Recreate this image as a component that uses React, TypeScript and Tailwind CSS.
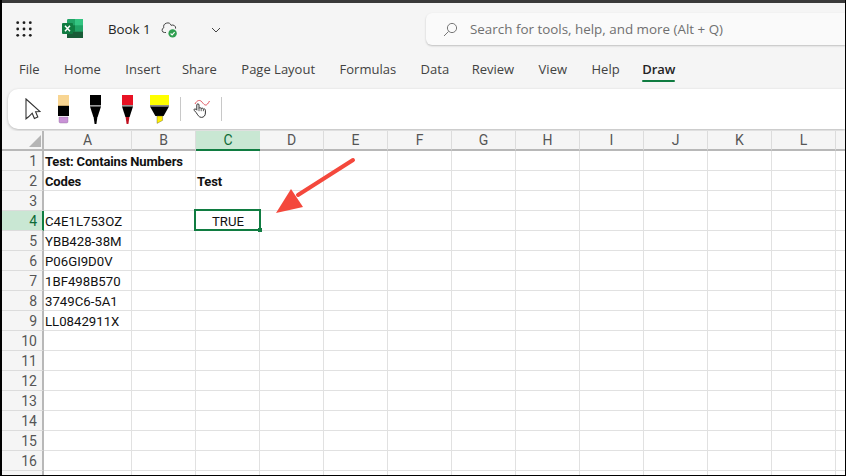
const cols = ["A", "B", "C", "D", "E", "F", "G", "H", "I", "J", "K", "L"];
const rows = Array.from({ length: 17 }, (_, i) => i + 1);
const tabs = [
	{ name: "File", cls: "" },
	{ name: "Home", cls: "" },
	{ name: "Insert", cls: "mr-[-3px]" },
	{ name: "Share", cls: "" },
	{ name: "Page Layout", cls: "" },
	{ name: "Formulas", cls: "" },
	{ name: "Data", cls: "mr-[-2px]" },
	{ name: "Review", cls: "" },
	{ name: "View", cls: "" },
	{ name: "Help", cls: "mr-[-2px]" },
];

const cells: Record<string, { text: string; bold?: boolean; center?: boolean }> = {
	"1A": { text: "Test: Contains Numbers", bold: true },
	"2A": { text: "Codes", bold: true },
	"2C": { text: "Test", bold: true },
	"4A": { text: "C4E1L753OZ" },
	"4C": { text: "TRUE", center: true },
	"5A": { text: "YBB428-38M" },
	"6A": { text: "P06GI9D0V" },
	"7A": { text: "1BF498B570" },
	"8A": { text: "3749C6-5A1" },
	"9A": { text: "LL0842911X" },
};

function Waffle() {
	const dots = [0, 1, 2];
	return (
		<svg width="16" height="16" viewBox="0 0 16 16" className="shrink-0">
			{dots.map((y) =>
				dots.map((x) => <circle key={`${x}-${y}`} cx={1.7 + x * 6.3} cy={1.7 + y * 6.3} r="1.4" fill="#1f1f1f" />),
			)}
		</svg>
	);
}

function ExcelLogo() {
	return (
		<svg width="21" height="19" viewBox="0 0 21 19" className="shrink-0">
			<rect x="5" y="0" width="16" height="19" rx="1.2" fill="#21a366" />
			<rect x="13" y="0" width="8" height="6.3" fill="#33c481" />
			<rect x="5" y="6.3" width="8" height="6.4" fill="#107c41" />
			<rect x="13" y="12.7" width="8" height="6.3" fill="#185c37" />
			<rect x="5" y="12.7" width="8" height="6.3" fill="#185c37" />
			<rect x="0" y="4" width="11" height="11" rx="1" fill="#107c41" />
			<path d="M3 6.8 L8 12.2 M8 6.8 L3 12.2" stroke="#fff" strokeWidth="1.5" />
		</svg>
	);
}

function CloudCheck() {
	return (
		<svg width="17" height="17" viewBox="0 0 17 17" className="shrink-0">
			<path
				d="M5 11.5 H3.4 A2.4 2.4 0 0 1 2.8 6.8 A3.9 3.9 0 0 1 10.2 4.4 A3 3 0 0 1 14.6 7.6"
				fill="none"
				stroke="#444"
				strokeWidth="1"
			/>
			<circle cx="11.6" cy="12.4" r="4.2" fill="#2e9e4f" />
			<path d="M9.6 12.5 L11.1 13.9 L13.6 11.1" fill="none" stroke="#fff" strokeWidth="1.1" />
		</svg>
	);
}

function Cursor() {
	return (
		<svg width="16" height="22" viewBox="0 0 16 22" className="shrink-0">
			<path d="M1 1 L15 13.5 L10.6 13.8 L12.8 19 L9.4 20.5 L7.2 15.2 L3.6 18.8 L1 20.8 Z" fill="#fff" stroke="#333" strokeWidth="1.1" />
		</svg>
	);
}

function Pencil() {
	return (
		<svg width="13" height="29" viewBox="0 0 13 29" className="shrink-0">
			<rect x="1" y="0" width="11" height="10" fill="#f8d592" />
			<rect x="1" y="10" width="11" height="1" fill="#c9a76a" />
			<rect x="1" y="11" width="11" height="10" fill="#000" />
			<path d="M2 22 H11 V26.5 Q11 28 9.5 28 H3.5 Q2 28 2 26.5 Z" fill="#c992d6" stroke="#8e6a98" strokeWidth="0.4" />
		</svg>
	);
}

function Pen({ color }: { color: string }) {
	return (
		<svg width="13" height="29" viewBox="0 0 13 29" className="shrink-0">
			<rect x="1" y="0" width="11" height="10" fill={color} />
			<rect x="1" y="10" width="11" height="1.6" fill="#9a9a9a" />
			<path d="M1 11.6 H12 L8.6 22 H4.4 Z" fill="#000" />
			<path d="M4.6 22 H8.4 L7.4 29 H5.6 Z" fill={color === "#e81224" ? "#c00f1e" : "#000"} />
		</svg>
	);
}

function Highlighter() {
	return (
		<svg width="21" height="29" viewBox="0 0 21 29" className="shrink-0">
			<rect x="1" y="0" width="19" height="10" fill="#ffff00" />
			<rect x="1" y="10" width="19" height="1.4" fill="#8a8a8a" />
			<path d="M1 11.4 H20 L14.6 21 H6.4 Z" fill="#000" />
			<path d="M8 21 H13.6 V25.4 L8 28.4 Z" fill="#ffef00" stroke="#555" strokeWidth="0.4" />
		</svg>
	);
}

function TouchDraw() {
	return (
		<svg width="18" height="20" viewBox="0 0 18 20" className="shrink-0">
			<path d="M3 5 C5 1 8 0.5 10 3 C11.5 5 13.5 7.5 15.5 5 C16.5 3.8 17 3 17.5 2" fill="none" stroke="#e0525c" strokeWidth="1" />
			<path
				d="M4.2 13.6 L2.4 11.6 C1.4 10.4 2.8 9.2 3.8 10.2 L4.8 11.2 L4.8 6 C4.8 4.4 7 4.4 7 6 L7 9.4 C7.2 8.4 9 8.4 9.2 9.6 C9.6 8.8 11.2 9 11.4 10.2 C11.8 9.6 13.4 9.8 13.4 11.2 L13.4 14 C13.4 16.6 11.8 18.4 9.4 18.4 C6.8 18.4 5.6 15.6 4.2 13.6 Z"
				fill="#fff"
				stroke="#333"
				strokeWidth="1"
			/>
			<path d="M7 9.4 V12.2 M9.2 9.6 V12.2 M11.4 10.2 V12.2" stroke="#333" strokeWidth="0.8" />
		</svg>
	);
}

export default function App() {
	return (
		<div className="flex h-[476px] w-[846px] flex-col overflow-hidden bg-black pr-[1px] pb-[1px] pl-[2px] font-['Open_Sans',sans-serif]">
			<div className="h-[3px] shrink-0 bg-[#3a3a3a]" />
			<div className="flex min-h-0 flex-1 flex-col bg-[#f5f5f5]">
				<div className="flex h-[42px] shrink-0 items-end pb-[1px]">
					<div className="mb-[7px] ml-[14px]">
						<Waffle />
					</div>
					<div className="mb-[6px] ml-[30px]">
						<ExcelLogo />
					</div>
					<span className="mb-[4px] ml-[25px] w-[42px] text-[13.3px] whitespace-nowrap text-[#242424]">Book 1</span>
					<div className="mb-[6px] ml-[11px]">
						<CloudCheck />
					</div>
					<svg width="10" height="6" viewBox="0 0 10 6" className="mb-[11px] ml-[33px] shrink-0">
						<path d="M1 1 L5 5 L9 1" fill="none" stroke="#444" strokeWidth="1" />
					</svg>
					<div className="-mb-[1px] ml-[205px] flex h-[32px] flex-1 items-center rounded-l-md bg-[#fafafa] pl-[17px] shadow-[0_1px_2px_rgba(0,0,0,0.22)]">
						<svg width="15" height="15" viewBox="0 0 15 15" className="shrink-0">
							<circle cx="9" cy="6" r="4.6" fill="none" stroke="#777" strokeWidth="1" />
							<path d="M5.6 9.4 L1 14" stroke="#777" strokeWidth="1" />
						</svg>
						<span className="ml-[12px] text-[13.4px] text-[#707070]">Search for tools, help, and more (Alt + Q)</span>
					</div>
				</div>
				<div className="flex h-[44px] shrink-0 items-center gap-[24.5px] pt-[5px] pl-[17px] text-[13px] text-[#424242]">
					{tabs.map((t) => (
						<span key={t.name} className={t.cls}>
							{t.name}
						</span>
					))}
					<span className="relative font-semibold text-[#242424]">
						Draw
						<span className="absolute top-[20px] right-0 left-0 h-[2px] rounded bg-[#107c41]" />
					</span>
				</div>
				<div className="ml-[6px] flex h-[40px] shrink-0 items-center rounded-l-[10px] bg-white pl-[17px] shadow-[0_1px_3px_rgba(0,0,0,0.25)]">
					<Cursor />
					<div className="ml-[16px]">
						<Pencil />
					</div>
					<div className="ml-[19px]">
						<Pen color="#000" />
					</div>
					<div className="ml-[19px]">
						<Pen color="#e81224" />
					</div>
					<div className="ml-[15px]">
						<Highlighter />
					</div>
					<div className="ml-[10px] h-[24px] w-px bg-[#c8c8c8]" />
					<div className="ml-[11px]">
						<TouchDraw />
					</div>
					<div className="ml-[11px] h-[24px] w-px bg-[#c8c8c8]" />
				</div>
				<div className="relative mt-[2px] min-h-0 flex-1 overflow-hidden bg-white font-['Roboto',sans-serif]">
					<div className="grid grid-cols-[42px_88px_64px_64px_64px_64px_64px_64px_64px_64px_64px_64px_64px_1fr] grid-rows-[20px_repeat(17,20px)]">
						<div className="relative border-r-2 border-b-2 border-r-[#b8b8b8] border-b-[#b8b8b8] bg-[#f5f5f5]">
							<div className="absolute right-[1px] bottom-[2px] h-0 w-0 border-b-[12px] border-l-[12px] border-b-[#b5b5b5] border-l-transparent" />
						</div>
						{cols.map((c) => (
							<div
								key={c}
								className={
									c === "C"
										? "flex items-center justify-center border-b-2 border-b-[#107c41] bg-[#c9e7d3] text-[14px] text-[#0e6b38]"
										: "flex items-center justify-center border-r border-b-2 border-r-[#dcdcdc] border-b-[#b8b8b8] bg-[#f5f5f5] text-[14px] text-[#555]"
								}
							>
								{c}
							</div>
						))}
						<div className="border-b-2 border-b-[#b8b8b8] bg-[#f5f5f5]" />
						{rows.map((r) => (
							<div key={r} className="contents">
								<div
									className={
										r === 4
											? "flex items-center justify-end border-r-2 border-b border-r-[#107c41] border-b-[#dcdcdc] bg-[#c9e7d3] pt-[1px] pr-[5px] text-[14px] text-[#0e6b38]"
											: "flex items-center justify-end border-r-2 border-b border-r-[#b8b8b8] border-b-[#dcdcdc] bg-[#f5f5f5] pt-[1px] pr-[5px] text-[14px] text-[#555]"
									}
								>
									{r < 17 ? r : ""}
								</div>
								{cols.map((c) => {
									const cell = cells[`${r}${c}`];
									return (
										<div
											key={c}
											className={`flex items-center border-b border-b-[#e1e1e1] pt-[2px] pl-[1px] whitespace-nowrap text-[#111] ${
												cell && c === "A" && r === 1 ? "" : "border-r border-r-[#e1e1e1]"
											} ${
												cell?.bold ? "text-[13px] font-bold tracking-[-0.15px]" : "text-[13.2px]"
											} ${cell?.center ? "justify-center" : ""}`}
										>
											{cell?.text}
										</div>
									);
								})}
								<div className="border-b border-b-[#e1e1e1]" />
							</div>
						))}
					</div>
					<div className="absolute top-[78px] left-[192px] h-[22px] w-[67px] border-2 border-[#107c41]">
						<div className="absolute -right-[3px] -bottom-[3px] h-[4px] w-[4px] bg-[#107c41]" />
					</div>
					<svg width="90" height="64" viewBox="0 0 90 64" className="absolute top-[24px] left-[270px]">
						<path d="M81 5 L26 40" stroke="#f4483c" strokeWidth="4" strokeLinecap="round" />
						<path d="M4 58 L19 34 L31 52 Z" fill="#f4483c" />
					</svg>
				</div>
			</div>
		</div>
	);
}
